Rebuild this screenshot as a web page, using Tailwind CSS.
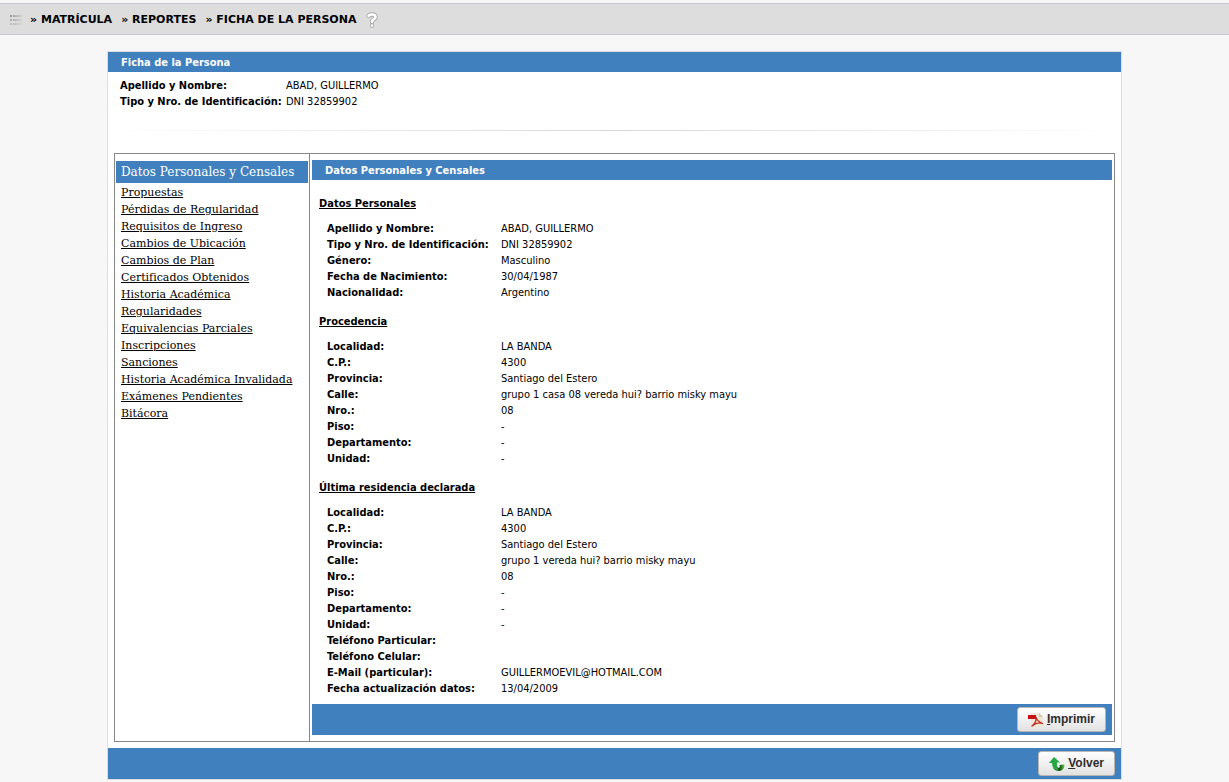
<!DOCTYPE html>
<html lang="es">
<head>
<meta charset="utf-8">
<meta name="viewport" content="width=device-width, initial-scale=1">
<title>Ficha de la Persona</title>
<script src="https://cdn.jsdelivr.net/npm/@tailwindcss/browser@4"></script>
</head>
<body class="bg-[#f7f7f7] pt-[3px] font-['DejaVu_Sans_Condensed','DejaVu_Sans',sans-serif] text-[11px] leading-4 text-black">
<header class="flex h-8 items-center border-y border-[#c8c8d0] bg-[#dddddd] pt-0.5 pl-2.5">
  <svg class="mr-2 h-3 w-3" viewBox="0 0 12 12" aria-hidden="true">
    <defs><linearGradient id="lines"><stop offset="0" stop-color="#a8a8a8"/><stop offset="1" stop-color="#d0d0d0"/></linearGradient></defs>
    <g fill="#999"><rect y="1" width="2" height="2"/><rect y="5" width="2" height="2" opacity=".7"/><rect y="9" width="2" height="2" opacity=".45"/></g>
    <g fill="url(#lines)"><rect x="3" y="1" width="9" height="2"/><rect x="3" y="5" width="9" height="2" opacity=".8"/><rect x="3" y="9" width="9" height="2" opacity=".55"/></g>
  </svg>
  <h1 class="flex gap-[9px] font-['DejaVu_Sans',sans-serif] text-[11px] font-bold"><span>» MATRÍCULA</span> <span>» REPORTES</span> <span>» FICHA DE LA PERSONA</span></h1>
  <button type="button" aria-label="Ayuda" class="ml-2.5">
    <svg class="h-4 w-3" viewBox="0 0 12 16" fill="none" stroke-linecap="round" stroke-linejoin="round" aria-hidden="true">
      <path d="M2.500 4Q3 2.500 6 2.500Q9.500 2.500 9.500 5Q9.500 6.700 7.500 7.500Q6 8.200 6 9.800M6 13.500v.1" stroke="#aaa" stroke-width="4.4"/>
      <path d="M2.500 4Q3 2.500 6 2.500Q9.500 2.500 9.500 5Q9.500 6.700 7.500 7.500Q6 8.200 6 9.800M6 13.500v.1" stroke="#fff" stroke-width="2.6"/>
    </svg>
  </button>
</header>

<main class="mx-[107px] mt-4 border border-[#dddddd] bg-white">
  <h2 class="flex h-5 items-center bg-[#4080be] px-[13px] pt-0.5 font-bold text-white">Ficha de la Persona</h2>
  <table class="mt-1.5 ml-3 text-left">
    <tbody>
      <tr><th scope="row" class="w-[166px] p-0 font-bold">Apellido y Nombre:</th><td class="p-0">ABAD, GUILLERMO</td></tr>
      <tr><th scope="row" class="p-0 font-bold">Tipo y Nro. de Identificación:</th><td class="p-0">DNI 32859902</td></tr>
    </tbody>
  </table>
  <div class="mt-5 h-px bg-linear-to-r from-white via-[#d8d8d8] to-white"></div>

  <div class="mx-1.5 mt-[22px] flex border border-[#888888]">
    <nav aria-label="Secciones" class="w-[195px] shrink-0 border-r border-[#888888] px-px pt-[7px] font-['DejaVu_Serif',serif]">
      <a href="#datos" aria-current="page" class="flex h-[22px] items-center bg-[#4080be] px-[5px] text-xs text-white">Datos Personales y Censales</a>
      <ul class="px-[5px] pt-px leading-[17px] whitespace-nowrap underline">
        <li><a href="#propuestas">Propuestas</a></li>
        <li><a href="#perdidas">Pérdidas de Regularidad</a></li>
        <li><a href="#requisitos">Requisitos de Ingreso</a></li>
        <li><a href="#ubicacion">Cambios de Ubicación</a></li>
        <li><a href="#plan">Cambios de Plan</a></li>
        <li><a href="#certificados">Certificados Obtenidos</a></li>
        <li><a href="#historia">Historia Académica</a></li>
        <li><a href="#regularidades">Regularidades</a></li>
        <li><a href="#equivalencias">Equivalencias Parciales</a></li>
        <li><a href="#inscripciones">Inscripciones</a></li>
        <li><a href="#sanciones">Sanciones</a></li>
        <li><a href="#invalidada">Historia Académica Invalidada</a></li>
        <li><a href="#examenes">Exámenes Pendientes</a></li>
        <li><a href="#bitacora">Bitácora</a></li>
      </ul>
    </nav>

    <section id="datos" class="min-w-0 flex-1 px-0.5 pt-1.5 pb-1.5">
      <h2 class="flex h-5 items-center bg-[#4080be] px-[13px] pt-0.5 font-bold text-white">Datos Personales y Censales</h2>
      <div class="px-[7px] pt-4 pb-[7px]">
        <h3 class="font-bold underline">Datos Personales</h3>
        <table class="mt-[9px] ml-2 text-left">
          <tbody>
            <tr><th scope="row" class="w-[174px] p-0 font-bold">Apellido y Nombre:</th><td class="p-0">ABAD, GUILLERMO</td></tr>
            <tr><th scope="row" class="p-0 font-bold">Tipo y Nro. de Identificación:</th><td class="p-0">DNI 32859902</td></tr>
            <tr><th scope="row" class="p-0 font-bold">Género:</th><td class="p-0">Masculino</td></tr>
            <tr><th scope="row" class="p-0 font-bold">Fecha de Nacimiento:</th><td class="p-0">30/04/1987</td></tr>
            <tr><th scope="row" class="p-0 font-bold">Nacionalidad:</th><td class="p-0">Argentino</td></tr>
          </tbody>
        </table>
        <h3 class="mt-[13px] font-bold underline">Procedencia</h3>
        <table class="mt-[9px] ml-2 text-left">
          <tbody>
            <tr><th scope="row" class="w-[174px] p-0 font-bold">Localidad:</th><td class="p-0">LA BANDA</td></tr>
            <tr><th scope="row" class="p-0 font-bold">C.P.:</th><td class="p-0">4300</td></tr>
            <tr><th scope="row" class="p-0 font-bold">Provincia:</th><td class="p-0">Santiago del Estero</td></tr>
            <tr><th scope="row" class="p-0 font-bold">Calle:</th><td class="p-0">grupo 1 casa 08 vereda hui? barrio misky mayu</td></tr>
            <tr><th scope="row" class="p-0 font-bold">Nro.:</th><td class="p-0">08</td></tr>
            <tr><th scope="row" class="p-0 font-bold">Piso:</th><td class="p-0">-</td></tr>
            <tr><th scope="row" class="p-0 font-bold">Departamento:</th><td class="p-0">-</td></tr>
            <tr><th scope="row" class="p-0 font-bold">Unidad:</th><td class="p-0">-</td></tr>
          </tbody>
        </table>
        <h3 class="mt-[13px] font-bold underline">Última residencia declarada</h3>
        <table class="mt-[9px] ml-2 text-left">
          <tbody>
            <tr><th scope="row" class="w-[174px] p-0 font-bold">Localidad:</th><td class="p-0">LA BANDA</td></tr>
            <tr><th scope="row" class="p-0 font-bold">C.P.:</th><td class="p-0">4300</td></tr>
            <tr><th scope="row" class="p-0 font-bold">Provincia:</th><td class="p-0">Santiago del Estero</td></tr>
            <tr><th scope="row" class="p-0 font-bold">Calle:</th><td class="p-0">grupo 1 vereda hui? barrio misky mayu</td></tr>
            <tr><th scope="row" class="p-0 font-bold">Nro.:</th><td class="p-0">08</td></tr>
            <tr><th scope="row" class="p-0 font-bold">Piso:</th><td class="p-0">-</td></tr>
            <tr><th scope="row" class="p-0 font-bold">Departamento:</th><td class="p-0">-</td></tr>
            <tr><th scope="row" class="p-0 font-bold">Unidad:</th><td class="p-0">-</td></tr>
            <tr><th scope="row" class="p-0 font-bold">Teléfono Particular:</th><td class="p-0"></td></tr>
            <tr><th scope="row" class="p-0 font-bold">Teléfono Celular:</th><td class="p-0"></td></tr>
            <tr><th scope="row" class="p-0 font-bold">E-Mail (particular):</th><td class="p-0">GUILLERMOEVIL@HOTMAIL.COM</td></tr>
            <tr><th scope="row" class="p-0 font-bold">Fecha actualización datos:</th><td class="p-0">13/04/2009</td></tr>
          </tbody>
        </table>
      </div>
      <div class="flex h-[31px] items-center justify-end bg-[#4080be] px-1.5">
        <button type="button" class="flex h-[25px] items-center gap-[3px] rounded-[3px] border border-[#b8b4b0] bg-linear-to-b from-white to-[#e2e2e2] px-2.5 font-['Liberation_Sans',sans-serif] text-xs font-bold text-[#2d2d2d]">
          <svg class="h-4 w-4" viewBox="0 0 16 16" aria-hidden="true">
            <path d="M3 1h8l4 4v10.500H3z" fill="#ece8d8"/><path d="M11 1v4h4z" fill="#cfc8ac"/>
            <path d="M0 3h8v4H0z" fill="#c80f14"/>
            <path d="M7.500 5Q9.500 9.500 14.500 11.500Q9.500 9.500 4 14Q8.500 10.500 8.300 5" fill="none" stroke="#c5281c" stroke-width="1.300" stroke-linejoin="round"/>
          </svg>
          <span class="pb-px"><u>I</u>mprimir</span>
        </button>
      </div>
    </section>
  </div>

  <div class="mt-1.5 flex h-[31px] items-center justify-end bg-[#4080be] px-1.5">
    <button type="button" class="flex h-[25px] items-center gap-[3px] rounded-[3px] border border-[#b8b4b0] bg-linear-to-b from-white to-[#e2e2e2] px-2.5 font-['Liberation_Sans',sans-serif] text-xs font-bold text-[#2d2d2d]">
      <svg class="h-4 w-4" viewBox="0 0 16 16" aria-hidden="true">
        <defs><linearGradient id="dark"><stop offset="0" stop-color="#1d9d34"/><stop offset=".55" stop-color="#174018"/><stop offset="1" stop-color="#54d838"/></linearGradient></defs>
        <path d="M7 9Q8 12 10 12Q11.500 11 10.500 9L15.500 8.500Q15.500 15 10 15Q6 15 4 12Z" fill="url(#dark)"/>
        <path d="M5 1L11 6.500H8Q7.500 10.500 9.500 14.500Q3 14 3 7H0z" fill="#25a844"/>
      </svg>
      <span class="pb-px"><u>V</u>olver</span>
    </button>
  </div>
</main>
</body>
</html>
